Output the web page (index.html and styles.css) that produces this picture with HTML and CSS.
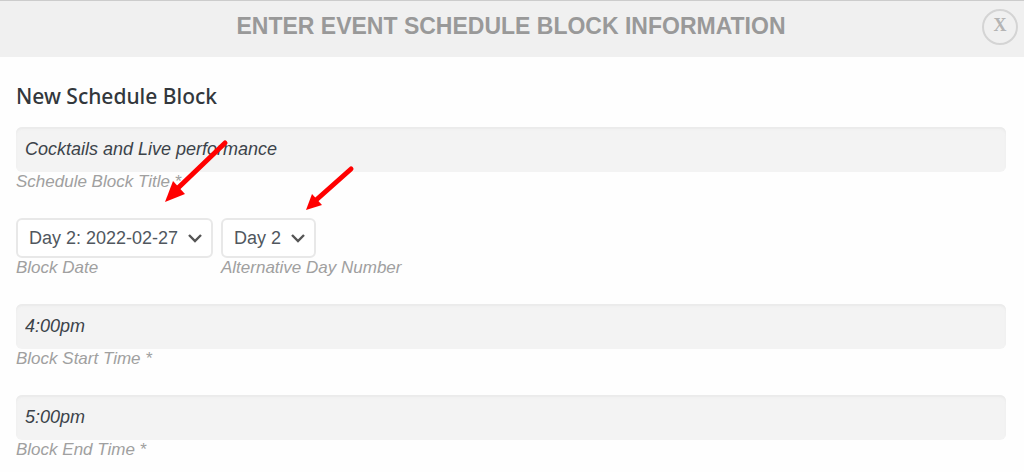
FILE: index.html
```html
<!DOCTYPE html>
<html lang="en">
<head>
  <meta charset="UTF-8" />
  <meta name="viewport" content="width=device-width, initial-scale=1" />
  <title>Enter Event Schedule Block Information</title>
  <link rel="stylesheet" href="styles.css">
</head>
<body>
  <header class="popup-header">
    <h1 class="popup-title">Enter Event Schedule Block Information</h1>
    <button class="popup-close" type="button" aria-label="Close">X</button>
  </header>

  <main class="popup-body">
    <form class="block-form">
      <h2 class="form-title">New Schedule Block</h2>

      <div class="field">
        <input type="text" id="block-title" value="Cocktails and Live performance">
        <label for="block-title">Schedule Block Title *</label>
      </div>

      <div class="field-row">
        <div class="field">
          <select id="block-date">
            <option>Day 2: 2022-02-27</option>
          </select>
          <label for="block-date">Block Date</label>
        </div>
        <div class="field">
          <select id="day-number">
            <option>Day 2</option>
          </select>
          <label for="day-number">Alternative Day Number</label>
        </div>
      </div>

      <div class="field">
        <input type="text" id="start-time" value="4:00pm">
        <label for="start-time">Block Start Time *</label>
      </div>

      <div class="field">
        <input type="text" id="end-time" value="5:00pm">
        <label for="end-time">Block End Time *</label>
      </div>
    </form>
  </main>

  <!-- Arrows pointing at the two day drop-downs -->
  <svg class="arrows" width="420" height="230" viewBox="0 0 420 230" aria-hidden="true">
    <path d="M225 143 L178 188" stroke-width="5" />
    <polygon points="165,202 173,181 185,194" />
    <path d="M351 169 L315 201" stroke-width="5" />
    <polygon points="306,210 312,194 322,205" />
  </svg>
</body>
</html>
```
FILE: styles.css
```css
* {
  box-sizing: border-box;
}

body {
  margin: 0;
  background: #fefefe;
  color: #3c434a;
  font-family: "Liberation Sans", Arial, sans-serif;
}

/* Header */
.popup-header {
  display: flex;
  align-items: center;
  padding: 0 6px 5px 40px;
  border-top: 1px solid #ccc;
  background: #f0f0f0;
}

.popup-title {
  flex: 1;
  margin: 0;
  color: #999;
  font-size: 23px;
  line-height: 51px;
  text-align: center;
  text-transform: uppercase;
}

.popup-close {
  width: 36px;
  height: 36px;
  padding: 0 0 2px;
  border: 2px solid #d4d4d4;
  border-radius: 50%;
  background: none;
  color: #b4b4b4;
  font-family: "Liberation Serif", "Times New Roman", serif;
  font-size: 18px;
  font-weight: bold;
  cursor: pointer;
}

/* Form */
.popup-body {
  padding: 24px 18px 12px 16px;
}

.block-form {
  display: flex;
  flex-direction: column;
  gap: 26px;
}

.form-title {
  margin: 0 0 -10px;
  color: #32373c;
  font-family: "Noto Sans", "Open Sans", sans-serif;
  font-size: 21px;
  font-weight: 500;
  line-height: 30px;
}

.field {
  display: flex;
  flex-direction: column;
  align-items: flex-start;
}

.field-row {
  display: flex;
  gap: 8px;
}

.field input {
  width: 100%;
  height: 45px;
  padding: 0 9px;
  border: 0;
  border-radius: 6px;
  background: #f3f3f3;
  box-shadow: inset 0 2px 2px #eaeaea;
  color: #3c434a;
  font-family: inherit;
  font-size: 18px;
  font-style: italic;
}

.field select {
  height: 40px;
  padding: 0 32px 0 11px;
  border: 2px solid #e8e8e8;
  border-radius: 6px;
  background: #fff url("data:image/svg+xml,%3Csvg xmlns='http://www.w3.org/2000/svg' width='16' height='10' viewBox='0 0 16 10'%3E%3Cpath d='M2 2l6 6 6-6' fill='none' stroke='%23555' stroke-width='2.4'/%3E%3C/svg%3E") no-repeat right 8px center;
  color: #50575e;
  font-family: inherit;
  font-size: 18px;
  appearance: none;
}

.field label {
  color: #a0a0a0;
  font-size: 17px;
  font-style: italic;
  line-height: 20px;
}

.arrows {
  position: absolute;
  top: 0;
  left: 0;
  fill: #f00;
  pointer-events: none;
}

.arrows path {
  stroke: #f00;
  stroke-linecap: round;
}
```
